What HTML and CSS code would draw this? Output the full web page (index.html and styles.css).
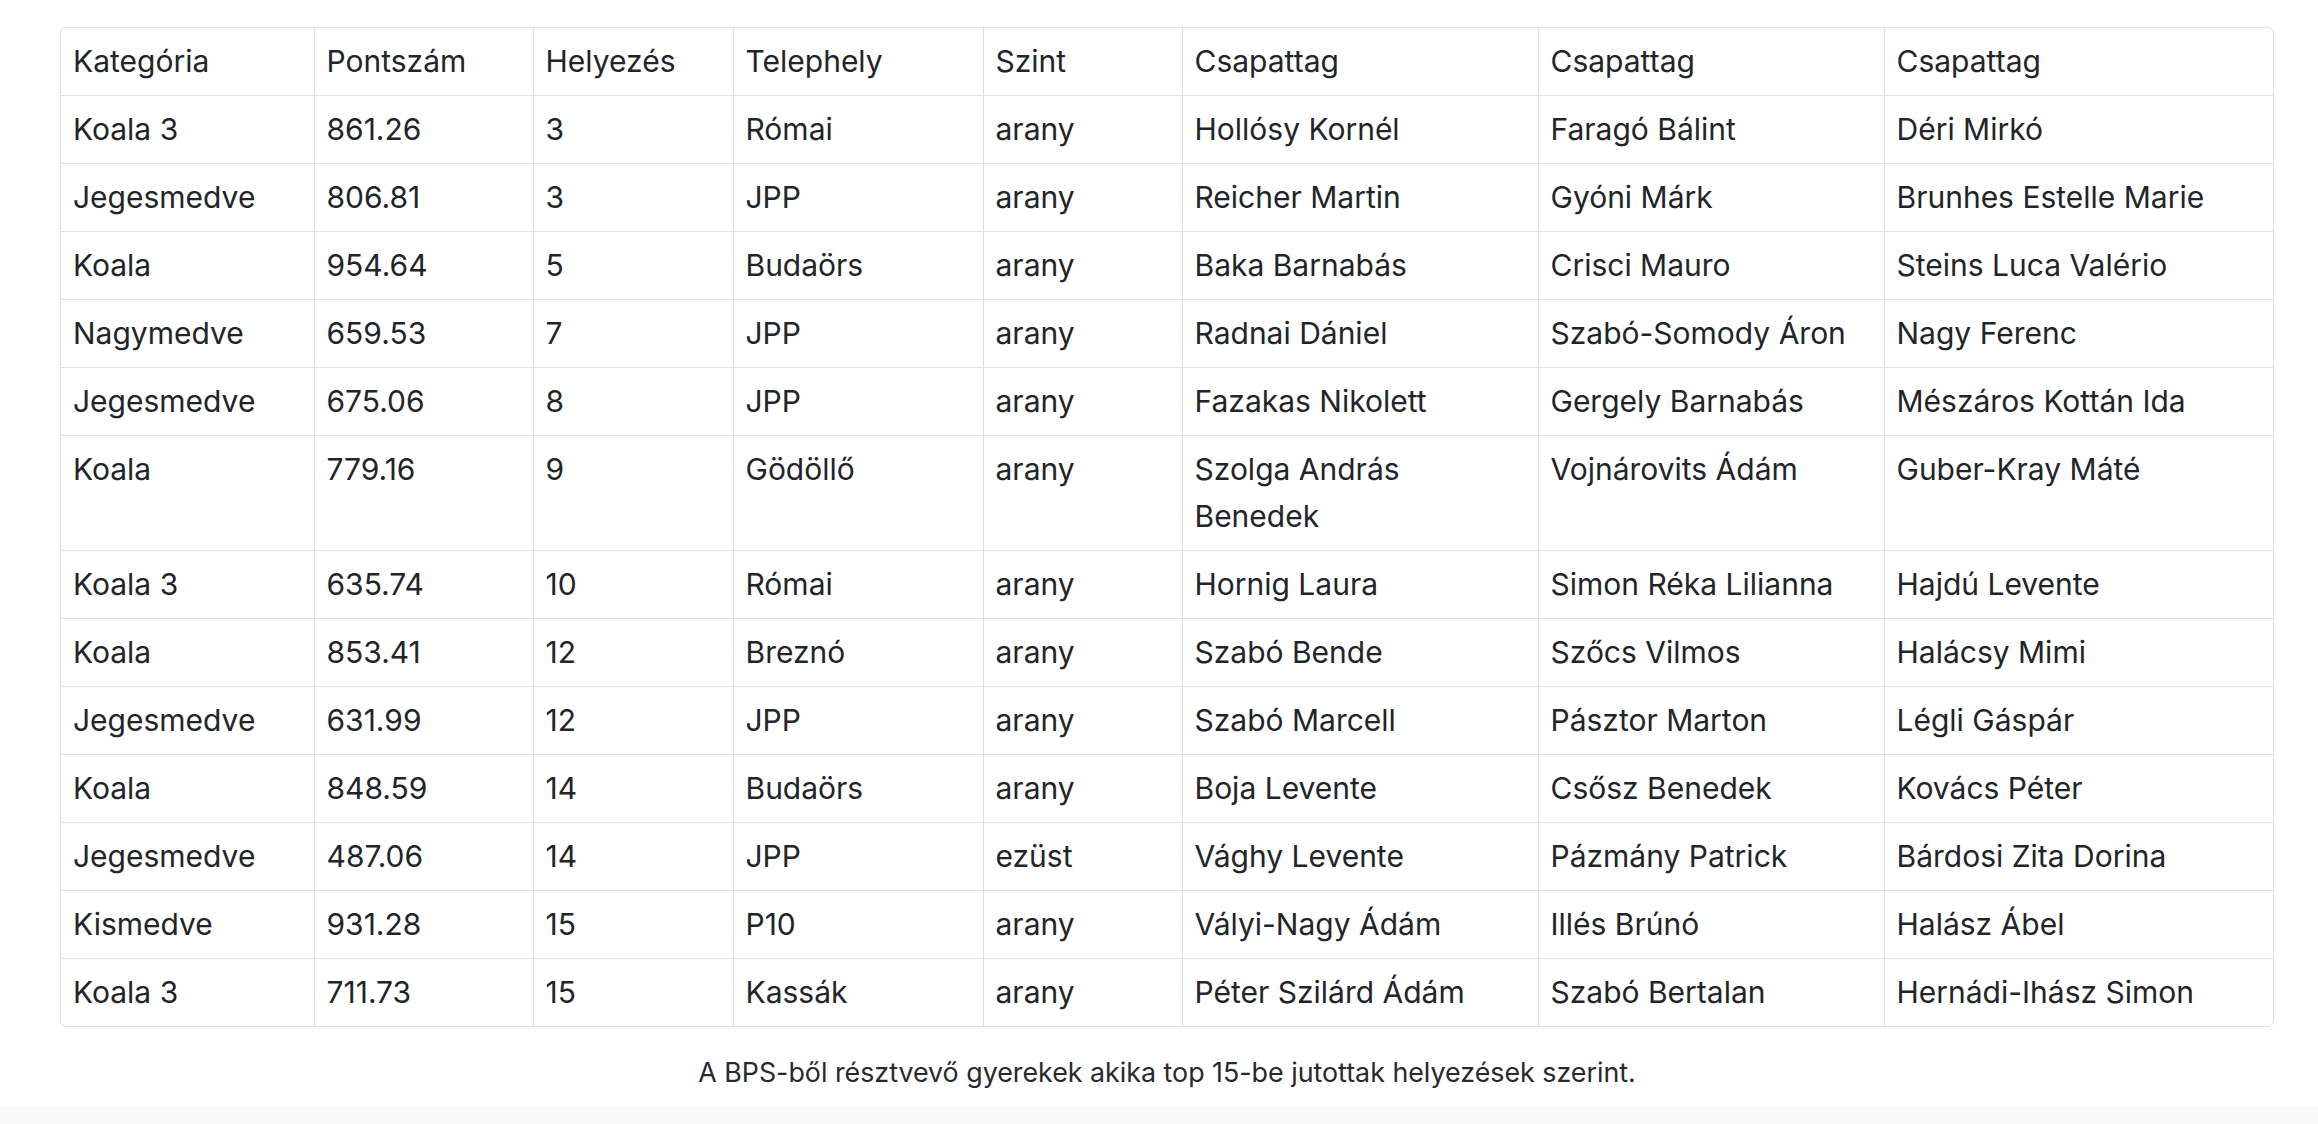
FILE: index.html
```html
<!DOCTYPE html>
<html lang="hu">
<head>
<meta charset="utf-8">
<title>BPS eredmények</title>
<link rel="stylesheet" href="styles.css">
</head>
<body>
<main class="page">
  <div class="table-wrap">
    <table class="results">
      <colgroup>
        <col class="c1"><col class="c2"><col class="c3"><col class="c4"><col class="c5"><col class="c6"><col class="c7"><col class="c8">
      </colgroup>
      <thead>
        <tr><th>Kategória</th><th>Pontszám</th><th>Helyezés</th><th>Telephely</th><th>Szint</th><th>Csapattag</th><th>Csapattag</th><th>Csapattag</th></tr>
      </thead>
      <tbody>
        <tr><td>Koala 3</td><td>861.26</td><td>3</td><td>Római</td><td>arany</td><td>Hollósy Kornél</td><td>Faragó Bálint</td><td>Déri Mirkó</td></tr>
        <tr><td>Jegesmedve</td><td>806.81</td><td>3</td><td>JPP</td><td>arany</td><td>Reicher Martin</td><td>Gyóni Márk</td><td>Brunhes Estelle Marie</td></tr>
        <tr><td>Koala</td><td>954.64</td><td>5</td><td>Budaörs</td><td>arany</td><td>Baka Barnabás</td><td>Crisci Mauro</td><td>Steins Luca Valério</td></tr>
        <tr><td>Nagymedve</td><td>659.53</td><td>7</td><td>JPP</td><td>arany</td><td>Radnai Dániel</td><td>Szabó-Somody Áron</td><td>Nagy Ferenc</td></tr>
        <tr><td>Jegesmedve</td><td>675.06</td><td>8</td><td>JPP</td><td>arany</td><td>Fazakas Nikolett</td><td>Gergely Barnabás</td><td>Mészáros Kottán Ida</td></tr>
        <tr><td>Koala</td><td>779.16</td><td>9</td><td>Gödöllő</td><td>arany</td><td>Szolga András Benedek</td><td>Vojnárovits Ádám</td><td>Guber-Kray Máté</td></tr>
        <tr><td>Koala 3</td><td>635.74</td><td>10</td><td>Római</td><td>arany</td><td>Hornig Laura</td><td>Simon Réka Lilianna</td><td>Hajdú Levente</td></tr>
        <tr><td>Koala</td><td>853.41</td><td>12</td><td>Breznó</td><td>arany</td><td>Szabó Bende</td><td>Szőcs Vilmos</td><td>Halácsy Mimi</td></tr>
        <tr><td>Jegesmedve</td><td>631.99</td><td>12</td><td>JPP</td><td>arany</td><td>Szabó Marcell</td><td>Pásztor Marton</td><td>Légli Gáspár</td></tr>
        <tr><td>Koala</td><td>848.59</td><td>14</td><td>Budaörs</td><td>arany</td><td>Boja Levente</td><td>Csősz Benedek</td><td>Kovács Péter</td></tr>
        <tr><td>Jegesmedve</td><td>487.06</td><td>14</td><td>JPP</td><td>ezüst</td><td>Vághy Levente</td><td>Pázmány Patrick</td><td>Bárdosi Zita Dorina</td></tr>
        <tr><td>Kismedve</td><td>931.28</td><td>15</td><td>P10</td><td>arany</td><td>Vályi-Nagy Ádám</td><td>Illés Brúnó</td><td>Halász Ábel</td></tr>
        <tr><td>Koala 3</td><td>711.73</td><td>15</td><td>Kassák</td><td>arany</td><td>Péter Szilárd Ádám</td><td>Szabó Bertalan</td><td>Hernádi-Ihász Simon</td></tr>
      </tbody>
    </table>
  </div>
  <p class="caption">A BPS-ből résztvevő gyerekek akika top 15-be jutottak helyezések szerint.</p>
</main>
<footer class="foot"></footer>
</body>
</html>
```
FILE: styles.css
```css
html, body {
  margin: 0;
  padding: 0;
  background: #ffffff;
}

body {
  font-family: Inter, "Noto Sans", "Liberation Sans", sans-serif;
  color: #212529;
}

.page {
  padding: 27px 44px 0 60px;
  height: 1107px;
  box-sizing: border-box;
}

.table-wrap {
  border: 1px solid #dde0e3;
  border-radius: 6px;
  overflow: hidden;
}

.results {
  width: 100%;
  table-layout: fixed;
  border-collapse: collapse;
  font-size: 30px;
  line-height: 47px;
}

.c1 { width: 253px; }
.c2 { width: 219px; }
.c3 { width: 200px; }
.c4 { width: 250px; }
.c5 { width: 199px; }
.c6 { width: 356px; }
.c7 { width: 346px; }
.c8 { width: 391px; }

.results th,
.results td {
  text-align: left;
  font-weight: 400;
  vertical-align: top;
  padding: 10px 12px;
  border-left: 1px solid #dde0e3;
  border-top: 1px solid #dde0e3;
}

.results tr > :first-child {
  border-left: none;
}

.results thead tr:first-child > * {
  border-top: none;
}

.caption {
  margin: 0;
  padding-top: 25px;
  text-align: center;
  font-size: 26.8px;
  line-height: 40px;
  color: #262a2e;
}

.foot {
  height: 17px;
  background: #fafafa;
}
```
